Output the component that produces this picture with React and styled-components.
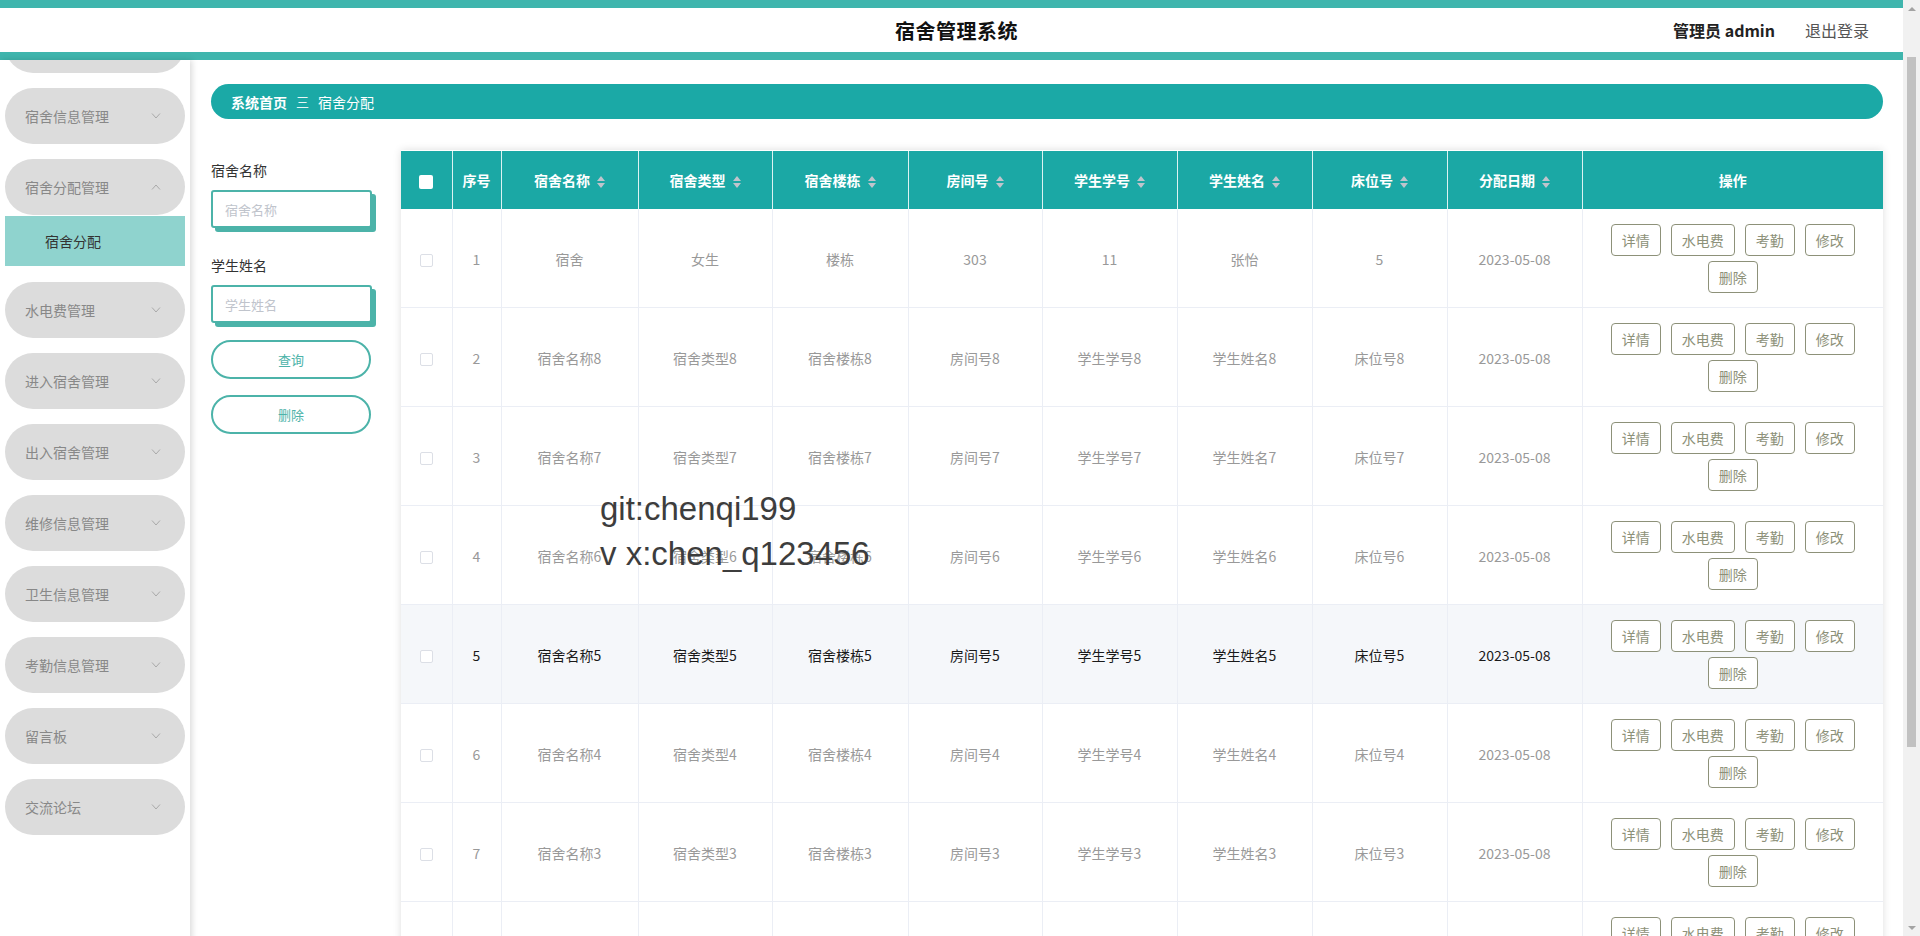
import React from 'react';
import styled, { createGlobalStyle } from 'styled-components';

const GlobalStyle = createGlobalStyle`
  html, body {
    margin: 0;
    padding: 0;
    background: #fff;
    font-family: "Noto Sans CJK SC", "Noto Sans", sans-serif;
  }
  * { box-sizing: border-box; }
`;

const Page = styled.div`
  position: relative;
  min-height: 100vh;
  padding-right: 17px;
`;

const Header = styled.header`
  height: 60px;
  border-top: 8px solid #3fb5ad;
  border-bottom: 8px solid #3fb5ad;
  background: #fff;
  display: grid;
  grid-template-columns: 1fr auto 1fr;
  align-items: center;
`;

const Title = styled.div`
  grid-column: 2;
  margin-left: 10px;
  font-size: 20px;
  font-weight: 700;
  color: #111;
  letter-spacing: 0.5px;
`;

const UserBox = styled.div`
  grid-column: 3;
  justify-self: end;
  display: flex;
  align-items: center;
  gap: 30px;
  padding-right: 34px;
  font-size: 16px;
`;

const UserName = styled.span`
  color: #222;
  font-weight: 600;
`;

const Logout = styled.span`
  color: #555;
`;

const Body = styled.div`
  display: flex;
  align-items: stretch;
`;

const Sidebar = styled.aside`
  width: 190px;
  flex-shrink: 0;
  overflow: hidden;
  background: #fff;
  box-shadow: 2px 0 6px rgba(0, 0, 0, 0.15);
  position: relative;
  z-index: 1;
`;

const MenuList = styled.nav`
  display: flex;
  flex-direction: column;
  margin-top: -43px;
  padding: 0 5px;
`;

const MenuPill = styled.div`
  height: 56px;
  border-radius: 28px;
  background: #dcdcdc;
  display: flex;
  align-items: center;
  justify-content: space-between;
  padding: 0 24px 0 20px;
  font-size: 14px;
  color: #888;
  margin-bottom: ${(p) => (p.$open ? '1px' : '15px')};
`;

const SubItem = styled.div`
  height: 50px;
  background: #8fd3ce;
  display: flex;
  align-items: center;
  padding-left: 40px;
  font-size: 14px;
  color: #333;
  margin-bottom: 16px;
`;

const Main = styled.main`
  flex: 1;
  min-width: 0;
  padding: 24px 20px 40px 21px;
`;

const Breadcrumb = styled.div`
  height: 35px;
  border-radius: 18px;
  background: #1ba9a6;
  color: #fff;
  display: flex;
  align-items: center;
  gap: 9px;
  padding-left: 20px;
  font-size: 14px;
  margin-bottom: 31px;
`;

const Crumb = styled.span`
  font-weight: ${(p) => (p.$bold ? 700 : 400)};
`;

const Sep = styled.span`
  font-size: 13px;
  opacity: 0.9;
`;

const Content = styled.div`
  display: flex;
  align-items: flex-start;
  gap: 25px;
`;

const SearchCol = styled.div`
  width: 165px;
  flex-shrink: 0;
  display: flex;
  flex-direction: column;
  padding-top: 10px;
`;

const Label = styled.div`
  font-size: 14px;
  line-height: 20px;
  color: #333;
  margin-top: ${(p) => (p.$first ? '0' : '27px')};
`;

const Input = styled.input`
  margin-top: 10px;
  width: 161px;
  height: 38px;
  border: 2px solid #4cb3a9;
  border-radius: 3px;
  box-shadow: 4px 4px 0 #4cb3a9;
  padding: 0 12px;
  font-size: 13px;
  font-family: inherit;
  outline: none;
  &::placeholder { color: #c0c4cc; }
`;

const PillButton = styled.button`
  width: 160px;
  height: 39px;
  margin-top: ${(p) => p.$mt};
  border: 2px solid #4cb3a9;
  border-radius: 20px;
  background: #fff;
  color: #4cb3a9;
  font-size: 13px;
  font-family: inherit;
  cursor: pointer;
`;

const TableCard = styled.div`
  flex: 1;
  min-width: 0;
  background: #fff;
  box-shadow: 0 0 8px rgba(0, 0, 0, 0.13);
  padding-top: 1px;
`;

const Table = styled.table`
  width: 100%;
  border-collapse: collapse;
  table-layout: fixed;
`;

const Th = styled.th`
  height: 58px;
  padding: 0;
  background: #1ba8a5;
  color: #fff;
  font-size: 14px;
  font-weight: 700;
  text-align: center;
  border-right: 1px solid rgba(255, 255, 255, 0.85);
  &:last-child { border-right: none; }
`;

const Tr = styled.tr`
  background: ${(p) => (p.$hover ? '#f5f7fa' : '#fff')};
  color: ${(p) => (p.$hover ? '#1a1a1a' : '#999')};
`;

const Td = styled.td`
  padding: 15px 10px 14px;
  border-bottom: 1px solid #ebeef5;
  border-right: 1px solid #ebeef5;
  text-align: center;
  font-size: 14px;
  &:last-child { border-right: none; }
`;

const Check = styled.span`
  display: inline-block;
  vertical-align: middle;
  width: ${(p) => (p.$head ? '14px' : '13px')};
  height: ${(p) => (p.$head ? '14px' : '13px')};
  border-radius: 2px;
  background: #fff;
  border: ${(p) => (p.$head ? 'none' : '1px solid #dcdfe6')};
`;

const Caret = styled.span`
  display: inline-flex;
  flex-direction: column;
  gap: 2px;
  vertical-align: middle;
  margin-left: 7px;
  &::before, &::after {
    content: '';
    width: 0;
    height: 0;
    border-left: 4px solid transparent;
    border-right: 4px solid transparent;
  }
  &::before { border-bottom: 5px solid #c0c4cc; }
  &::after { border-top: 5px solid #c0c4cc; }
`;

const Ops = styled.div`
  display: flex;
  flex-wrap: wrap;
  justify-content: center;
  gap: 5px 10px;
`;

const OpButton = styled.button`
  height: 32px;
  padding: 0 10px;
  border: 1px solid #8d9179;
  border-radius: 4px;
  background: #fff;
  color: #8d9179;
  font-size: 14px;
  font-family: inherit;
  line-height: 30px;
`;

const Watermark = styled.div`
  position: absolute;
  top: 486px;
  left: 600px;
  font-family: "Liberation Sans", Arial, sans-serif;
  font-size: 33px;
  line-height: 45px;
  color: #3d3d3d;
  white-space: pre;
  pointer-events: none;
`;

/* window scrollbar as it appears in the screenshot */
const ScrollTrack = styled.div`
  position: fixed;
  top: 0;
  right: 0;
  width: 17px;
  height: 100vh;
  background: #f1f1f1;
  display: flex;
  flex-direction: column;
  align-items: center;
  z-index: 5;
`;

const ScrollArrow = styled.div`
  height: 17px;
  display: flex;
  align-items: center;
  justify-content: center;
  &::before {
    content: '';
    border-left: 4px solid transparent;
    border-right: 4px solid transparent;
    ${(p) => (p.$down ? 'border-top: 4px solid #a3a3a3;' : 'border-bottom: 4px solid #a3a3a3;')}
  }
`;

const ScrollGap = styled.div`
  flex: ${(p) => p.$flex};
`;

const ScrollThumb = styled.div`
  width: 9px;
  height: 690px;
  margin-top: 40px;
  background: #c1c1c1;
`;

const Chevron = ({ up }) => (
  <svg width="10" height="6" viewBox="0 0 10 6" fill="none">
    <polyline
      points={up ? '1,5.5 5,1 9,5.5' : '1,0.5 5,5 9,0.5'}
      stroke="#aaa"
      strokeWidth="1"
    />
  </svg>
);

const menus = [
  { label: '个人中心' },
  { label: '宿舍信息管理' },
  { label: '宿舍分配管理', open: true, sub: '宿舍分配' },
  { label: '水电费管理' },
  { label: '进入宿舍管理' },
  { label: '出入宿舍管理' },
  { label: '维修信息管理' },
  { label: '卫生信息管理' },
  { label: '考勤信息管理' },
  { label: '留言板' },
  { label: '交流论坛' },
];

const columns = [
  { key: 'name', title: '宿舍名称' },
  { key: 'type', title: '宿舍类型' },
  { key: 'building', title: '宿舍楼栋' },
  { key: 'room', title: '房间号' },
  { key: 'sid', title: '学生学号' },
  { key: 'sname', title: '学生姓名' },
  { key: 'bed', title: '床位号' },
  { key: 'date', title: '分配日期' },
];

const rows = [
  { name: '宿舍', type: '女生', building: '楼栋', room: '303', sid: '11', sname: '张怡', bed: '5', date: '2023-05-08' },
  ...[8, 7, 6, 5, 4, 3, 2, 1].map((n) => ({
    name: `宿舍名称${n}`,
    type: `宿舍类型${n}`,
    building: `宿舍楼栋${n}`,
    room: `房间号${n}`,
    sid: `学生学号${n}`,
    sname: `学生姓名${n}`,
    bed: `床位号${n}`,
    date: '2023-05-08',
  })),
];

const colWidths = [51, 49, 137, 134, 136, 134, 135, 135, 135, 135];

export default function App() {
  return (
    <Page>
      <GlobalStyle />
      <Header>
        <Title>宿舍管理系统</Title>
        <UserBox>
          <UserName>管理员 admin</UserName>
          <Logout>退出登录</Logout>
        </UserBox>
      </Header>
      <Body>
        <Sidebar>
          <MenuList>
            {menus.map((m) => (
              <React.Fragment key={m.label}>
                <MenuPill $open={m.open}>
                  <span>{m.label}</span>
                  <Chevron up={m.open} />
                </MenuPill>
                {m.sub && <SubItem>{m.sub}</SubItem>}
              </React.Fragment>
            ))}
          </MenuList>
        </Sidebar>
        <Main>
          <Breadcrumb>
            <Crumb $bold>系统首页</Crumb>
            <Sep>三</Sep>
            <Crumb>宿舍分配</Crumb>
          </Breadcrumb>
          <Content>
            <SearchCol>
              <Label $first>宿舍名称</Label>
              <Input placeholder="宿舍名称" />
              <Label>学生姓名</Label>
              <Input placeholder="学生姓名" />
              <PillButton $mt="17px">查询</PillButton>
              <PillButton $mt="16px">删除</PillButton>
            </SearchCol>
            <TableCard>
              <Table>
                <colgroup>
                  {colWidths.map((w, i) => (
                    <col key={i} style={{ width: w }} />
                  ))}
                  <col />
                </colgroup>
                <thead>
                  <tr>
                    <Th><Check $head /></Th>
                    <Th>序号</Th>
                    {columns.map((c) => (
                      <Th key={c.key}>
                        {c.title}
                        <Caret />
                      </Th>
                    ))}
                    <Th>操作</Th>
                  </tr>
                </thead>
                <tbody>
                  {rows.map((r, i) => (
                    <Tr key={i} $hover={i === 4}>
                      <Td><Check /></Td>
                      <Td>{i + 1}</Td>
                      {columns.map((c) => (
                        <Td key={c.key}>{r[c.key]}</Td>
                      ))}
                      <Td>
                        <Ops>
                          <OpButton>详情</OpButton>
                          <OpButton>水电费</OpButton>
                          <OpButton>考勤</OpButton>
                          <OpButton>修改</OpButton>
                          <OpButton>删除</OpButton>
                        </Ops>
                      </Td>
                    </Tr>
                  ))}
                </tbody>
              </Table>
            </TableCard>
          </Content>
        </Main>
      </Body>
      <Watermark>{'git:chenqi199\nv x:chen_q123456'}</Watermark>
      <ScrollTrack>
        <ScrollArrow />
        <ScrollThumb />
        <ScrollGap $flex="1" />
        <ScrollArrow $down />
      </ScrollTrack>
    </Page>
  );
}
